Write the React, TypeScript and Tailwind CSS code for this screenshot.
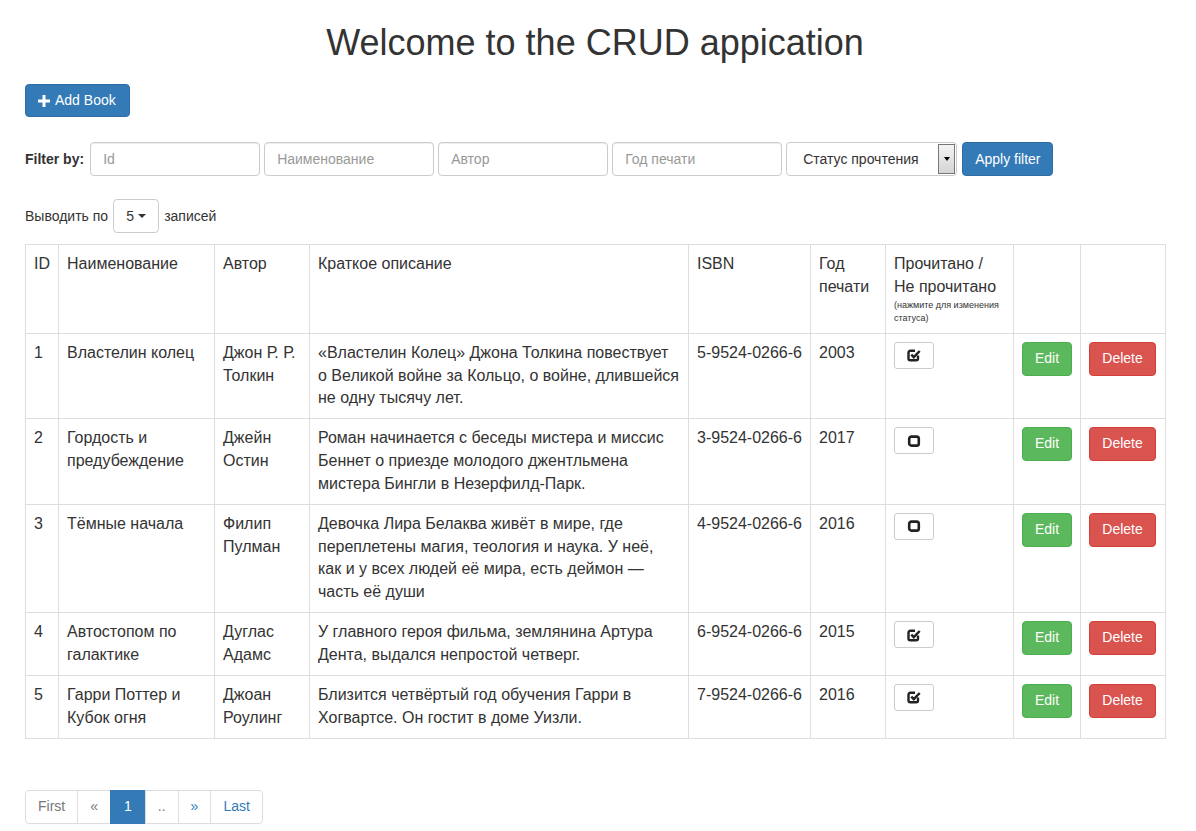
import React from 'react';

interface Book {
  id: number;
  title: string;
  author: string;
  description: string;
  isbn: string;
  year: number;
  read: boolean;
}

const books: Book[] = [
  {
    id: 1,
    title: 'Властелин колец',
    author: 'Джон Р. Р. Толкин',
    description: '«Властелин Колец» Джона Толкина повествует о Великой войне за Кольцо, о войне, длившейся не одну тысячу лет.',
    isbn: '5-9524-0266-6',
    year: 2003,
    read: true,
  },
  {
    id: 2,
    title: 'Гордость и предубеждение',
    author: 'Джейн Остин',
    description: 'Роман начинается с беседы мистера и миссис Беннет о приезде молодого джентльмена мистера Бингли в Незерфилд-Парк.',
    isbn: '3-9524-0266-6',
    year: 2017,
    read: false,
  },
  {
    id: 3,
    title: 'Тёмные начала',
    author: 'Филип Пулман',
    description: 'Девочка Лира Белаква живёт в мире, где переплетены магия, теология и наука. У неё, как и у всех людей её мира, есть деймон — часть её души',
    isbn: '4-9524-0266-6',
    year: 2016,
    read: false,
  },
  {
    id: 4,
    title: 'Автостопом по галактике',
    author: 'Дуглас Адамс',
    description: 'У главного героя фильма, землянина Артура Дента, выдался непростой четверг.',
    isbn: '6-9524-0266-6',
    year: 2015,
    read: true,
  },
  {
    id: 5,
    title: 'Гарри Поттер и Кубок огня',
    author: 'Джоан Роулинг',
    description: 'Близится четвёртый год обучения Гарри в Хогвартсе. Он гостит в доме Уизли.',
    isbn: '7-9524-0266-6',
    year: 2016,
    read: true,
  },
];

const PlusIcon = () => (
  <svg width="12" height="12" viewBox="0 0 12 12" className="inline-block">
    <rect x="4.5" y="0" width="3" height="12" fill="white" />
    <rect x="0" y="4.5" width="12" height="3" fill="white" />
  </svg>
);

const StatusIcon = ({ checked }: { checked: boolean }) => (
  <svg width="16" height="16" viewBox="0 0 16 16">
    {checked ? (
      <>
        <path
          d="M12 8.5V11.5a1.8 1.8 0 0 1-1.8 1.8H4.3A1.8 1.8 0 0 1 2.5 11.5V5.6a1.8 1.8 0 0 1 1.8-1.8H9"
          fill="none"
          stroke="#222"
          strokeWidth="2.4"
        />
        <path d="M5.3 7.6l2.5 2.5 5.9-6.1" fill="none" stroke="#222" strokeWidth="2.5" />
      </>
    ) : (
      <rect x="3.2" y="3.6" width="9.6" height="9" rx="2.2" fill="none" stroke="#222" strokeWidth="2.6" />
    )}
  </svg>
);

const inputCls =
  'h-[34px] w-[170px] rounded-[4px] border border-[#ccc] px-3 text-[14px] text-[#555] placeholder:text-[#999] shadow-[inset_0_1px_1px_rgba(0,0,0,0.075)] outline-none';

export default function App() {
  return (
    <div className="min-h-screen bg-white text-[#333]" style={{ fontFamily: '"Liberation Sans", Arial, Helvetica, sans-serif' }}>
      <div className="ml-[25px] w-[1140px]">
        <h1 className="pt-[23px] h-[60px] text-center text-[36px] leading-[40px] font-normal">
          Welcome to the CRUD appication
        </h1>

        <button className="mt-[24px] flex h-[33px] items-center gap-[5px] rounded-[4px] border border-[#2e6da4] bg-[#337ab7] pl-[12px] pr-[13px] text-[14px] text-white">
          <PlusIcon />
          <span>Add Book</span>
        </button>

        {/* filters */}
        <div className="mt-[25px] flex items-center gap-[4px]">
          <span className="mr-[2px] text-[14px] font-bold">Filter by:</span>
          <input className={inputCls} placeholder="Id" />
          <input className={inputCls} placeholder="Наименование" />
          <input className={inputCls} placeholder="Автор" />
          <input className={inputCls} placeholder="Год печати" />
          <div className="flex h-[34px] w-[171px] items-stretch rounded-[4px] border border-[#ccc] bg-white">
            <span className="flex flex-1 items-center pl-[16px] text-[14px] text-[#333]">Статус прочтения</span>
            <span className="my-[1px] mr-[1px] flex w-[17px] items-center justify-center border border-[#777] bg-gradient-to-b from-[#f4f4f4] to-[#d4d4d4]">
              <span className="h-0 w-0 border-x-[3px] border-t-[4px] border-x-transparent border-t-black" />
            </span>
          </div>
          <button className="ml-[1px] h-[34px] rounded-[4px] border border-[#2e6da4] bg-[#337ab7] px-[12px] text-[14px] text-white">
            Apply filter
          </button>
        </div>

        {/* page size */}
        <div className="mt-[23px] flex items-center gap-[5px] text-[14px]">
          <span>Выводить по</span>
          <button className="flex h-[34px] w-[46px] items-center justify-center gap-[4px] rounded-[4px] border border-[#ccc] bg-white text-[14px]">
            5
            <span className="h-0 w-0 border-x-[4px] border-t-[4px] border-x-transparent border-t-[#333]" />
          </button>
          <span>записей</span>
        </div>

        {/* table */}
        <table className="mt-[11px] w-[1140px] table-fixed border-collapse border border-[#ddd] text-[16px] leading-[1.42857]">
          <colgroup>
            <col className="w-[33px]" />
            <col className="w-[156px]" />
            <col className="w-[95px]" />
            <col className="w-[379px]" />
            <col className="w-[122px]" />
            <col className="w-[75px]" />
            <col className="w-[128px]" />
            <col className="w-[67px]" />
            <col className="w-[85px]" />
          </colgroup>
          <thead>
            <tr className="text-left align-top">
              <th className="border border-[#ddd] p-[8px] font-normal">ID</th>
              <th className="border border-[#ddd] p-[8px] font-normal">Наименование</th>
              <th className="border border-[#ddd] p-[8px] font-normal">Автор</th>
              <th className="border border-[#ddd] p-[8px] font-normal">Краткое описание</th>
              <th className="border border-[#ddd] p-[8px] font-normal">ISBN</th>
              <th className="border border-[#ddd] p-[8px] font-normal">Год печати</th>
              <th className="border border-[#ddd] p-[8px] font-normal">
                Прочитано / Не прочитано
                <div className="text-[9px] leading-[13px]">(нажмите для изменения статуса)</div>
              </th>
              <th className="border border-[#ddd] p-[8px] font-normal"></th>
              <th className="border border-[#ddd] p-[8px] font-normal"></th>
            </tr>
          </thead>
          <tbody>
            {books.map((b) => (
              <tr key={b.id} className="align-top">
                <td className="border border-[#ddd] p-[8px]">{b.id}</td>
                <td className="border border-[#ddd] p-[8px]">{b.title}</td>
                <td className="border border-[#ddd] p-[8px]">{b.author}</td>
                <td className="border border-[#ddd] p-[8px]">{b.description}</td>
                <td className="border border-[#ddd] p-[8px]">{b.isbn}</td>
                <td className="border border-[#ddd] p-[8px]">{b.year}</td>
                <td className="border border-[#ddd] p-[8px]">
                  <button className="flex h-[27px] w-[40px] items-center justify-center rounded-[3px] border border-[#ccc] bg-white">
                    <StatusIcon checked={b.read} />
                  </button>
                </td>
                <td className="border border-[#ddd] p-[8px]">
                  <button className="h-[34px] w-[50px] rounded-[4px] border border-[#4cae4c] bg-[#5cb85c] text-[14px] text-white">
                    Edit
                  </button>
                </td>
                <td className="border border-[#ddd] p-[8px]">
                  <button className="h-[34px] w-[67px] rounded-[4px] border border-[#d43f3a] bg-[#d9534f] text-[14px] text-white">
                    Delete
                  </button>
                </td>
              </tr>
            ))}
          </tbody>
        </table>

        {/* pagination */}
        <ul className="mt-[51px] flex text-[14px]">
          <li className="flex h-[34px] items-center rounded-l-[4px] border border-[#ddd] px-[12px] text-[#777]">First</li>
          <li className="-ml-px flex h-[34px] items-center border border-[#ddd] px-[12px] text-[#777]">«</li>
          <li className="-ml-px flex h-[34px] items-center border border-[#337ab7] bg-[#337ab7] px-[13px] text-white">1</li>
          <li className="-ml-px flex h-[34px] items-center border border-[#ddd] px-[12px] text-[#777]">..</li>
          <li className="-ml-px flex h-[34px] items-center border border-[#ddd] px-[12px] text-[#337ab7]">»</li>
          <li className="-ml-px flex h-[34px] items-center rounded-r-[4px] border border-[#ddd] px-[12px] text-[#337ab7]">Last</li>
        </ul>
        <div className="h-[20px]" />
      </div>
    </div>
  );
}
